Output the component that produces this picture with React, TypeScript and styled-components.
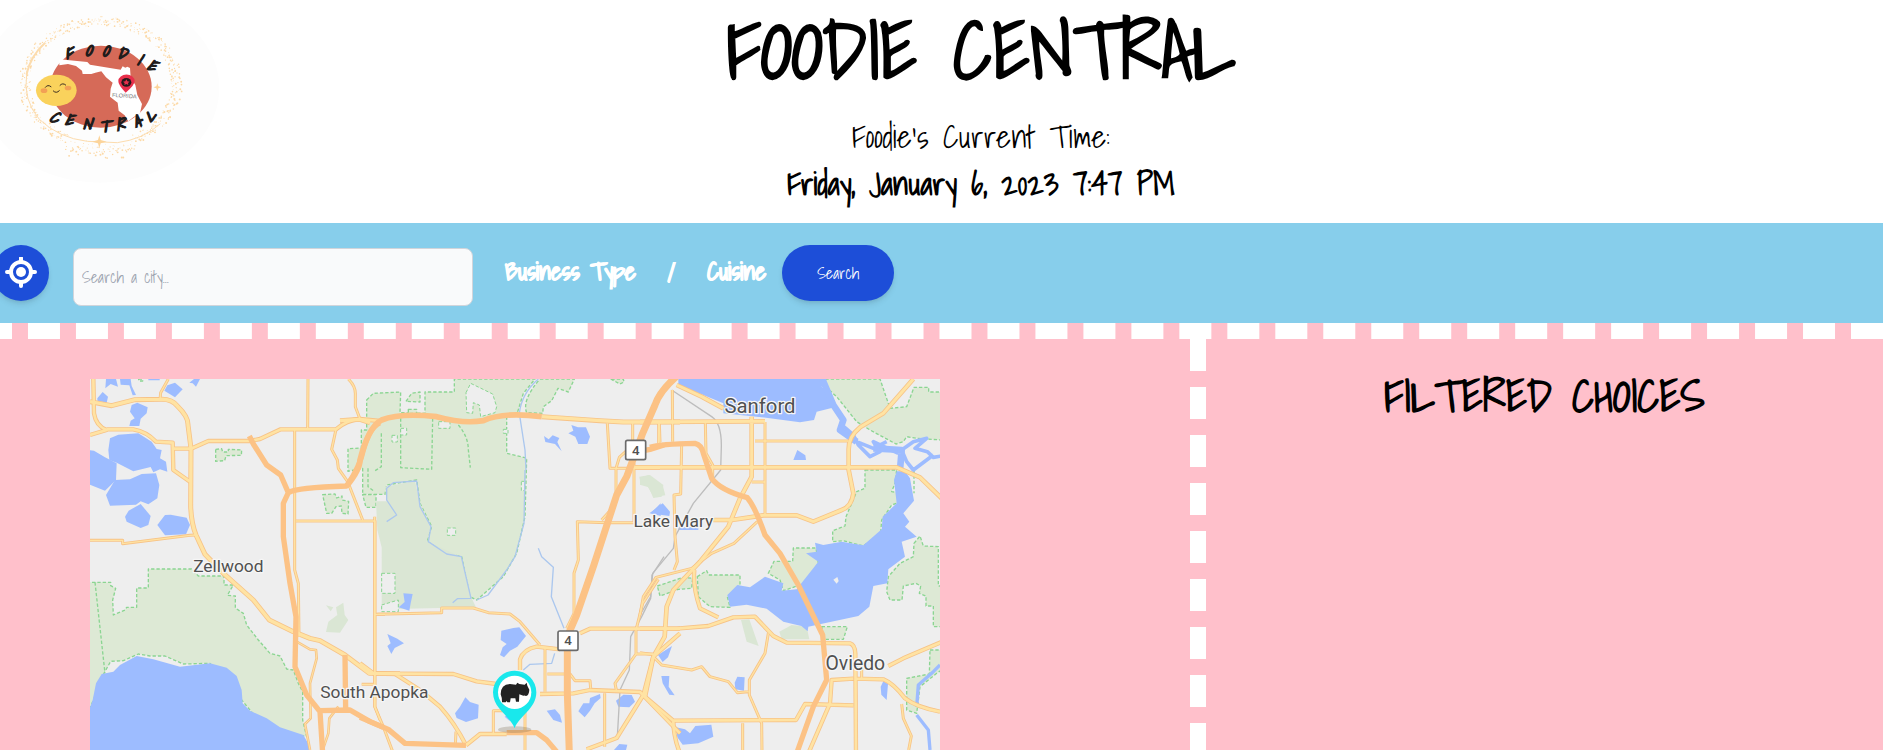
import React from "react";
import styled, { createGlobalStyle } from "styled-components";

const handwriting = `"Shadows Into Light", "Liberation Sans", sans-serif`;

const GlobalStyle = createGlobalStyle`
  *, *::before, *::after { box-sizing: border-box; }
  body { margin: 0; background: #fff; color: #000; font-family: ${handwriting}; }
  h1, h2, p { margin: 0; }
  button, input { font-family: inherit; }
`;

const Page = styled.div`
  height: 100vh;
  overflow: hidden;
  display: flex;
  flex-direction: column;
`;

const Header = styled.header`
  display: grid;
  grid-template-columns: 220px 1fr 141px;
  flex: none;
`;

const LogoArt = styled.svg`
  display: block;
  width: 220px;
  height: 190px;
`;

const Heading = styled.div`
  text-align: center;
  padding-bottom: 16px;
`;

const Title = styled.h1`
  font-size: 80px;
  line-height: 100px;
  font-weight: 700;
`;

const TimeLabel = styled.p`
  margin-top: 12px;
  font-size: 32px;
  line-height: 48px;
`;

const TimeValue = styled.p`
  font-size: 32px;
  line-height: 47px;
  font-weight: 700;
`;

const Toolbar = styled.form`
  flex: none;
  display: flex;
  align-items: center;
  height: 100px;
  margin-left: -7px;
  background: #87ceeb;
`;

const PillButton = styled.button<{ $round?: boolean }>`
  display: flex;
  align-items: center;
  justify-content: center;
  width: ${(p) => (p.$round ? 56 : 112)}px;
  height: 56px;
  padding: 0;
  border: 0;
  border-radius: 28px;
  background: #1d4ed8;
  color: #fff;
  font-size: 16px;
  box-shadow: 0 4px 6px -1px rgba(0, 0, 0, 0.1), 0 2px 4px -2px rgba(0, 0, 0, 0.1);
  cursor: pointer;
`;

const CityInput = styled.input`
  width: 400px;
  height: 58px;
  margin: 8px 32px 0 24px;
  padding: 0 8px;
  border: 1px solid #d1d5db;
  border-radius: 8px;
  background: #f9fafb;
  font-size: 16px;
  &::placeholder { color: #9ca3af; opacity: 1; }
`;

const Filters = styled.div`
  display: flex;
  align-items: center;
  gap: 32px;
  margin-right: 16px;
  padding-bottom: 4px;
  color: #fff;
  font-size: 24px;
  font-weight: 700;
  -webkit-text-stroke: 1px #fff;
`;

const FilterButton = styled.button`
  padding: 0;
  border: 0;
  background: none;
  color: inherit;
  font-size: inherit;
  font-weight: inherit;
  cursor: pointer;
`;

const Board = styled.main`
  flex: 1 0 auto;
  display: grid;
  grid-template-columns: 1210fr 693fr;
  margin-left: -20px;
  border-top: 16px dashed #fff;
  background: pink;
`;

const MapPanel = styled.section`
  padding: 40px 250px 0 110px;
`;

const MapArt = styled.svg`
  display: block;
  width: 100%;
  height: auto;
  background: #eee;
`;

const Choices = styled.section`
  padding: 28px 0 0 16px;
  text-align: center;
  background: repeating-linear-gradient(#fff 0 32px, transparent 32px 48px) 0 0 / 16px 100% no-repeat;
`;

const ChoicesTitle = styled.h2`
  font-size: 45px;
  line-height: 56px;
  font-weight: 700;
`;

/* ---------- logo ---------- */

const rim = Array.from({ length: 520 }, (_, i) => {
  const a = i * 2.399963;
  const n = Math.abs(Math.sin(i * 12.9898) * 43758.5453) % 1;
  const m = Math.abs(Math.sin(i * 78.233) * 12543.123) % 1;
  const spread = 0.94 + n * 0.15;
  return {
    x: 302 + Math.cos(a) * 225 * spread,
    y: 250 + Math.sin(a) * 184 * spread + (Math.sin(a) > 0.9 ? m * 34 : 0),
    r: 1 + m * 2,
  };
});

const topLetters: [string, number, number, number][] = [
  ["F", 209, 176, -8], ["O", 266, 168, 0], ["O", 317, 169, 2],
  ["D", 363, 177, 10], ["I", 412, 195, 20], ["E", 448, 212, 28],
];
const bottomLetters: [string, number, number, number][] = [
  ["C", 158, 367, 24], ["E", 204, 376, 14], ["N", 260, 388, 8], ["T", 311, 395, 0],
  ["R", 364, 391, -8], ["A", 416, 380, -18], ["L", 461, 361, -32],
];

const Logo = () => (
  <LogoArt viewBox="0 0 660 570" role="img" aria-label="Foodie Central logo">
    <ellipse cx="300" cy="264" rx="358" ry="284" fill="#fdfdfd" />
    <g fill="#fcd9a6">
      {rim.map((d, i) => <circle key={i} cx={d.x} cy={d.y} r={d.r} />)}
    </g>
    <g fill="none" stroke="#fcdcae" strokeLinecap="round">
      <path d="M134 130Q92 168 80 222" strokeWidth="6" />
      <path d="M80 222Q68 300 118 358Q176 414 262 424L352 428Q430 418 480 372" strokeWidth="3" />
    </g>
    <path d="M298 406l4 14 18 5-18 5-4 14-4-14-18-5 18-5zM472 250l3 9 9 3-9 3-3 9-3-9-9-3 9-3z" fill="#fcd49a" />
    <ellipse cx="303" cy="260" rx="152" ry="123" fill="#d66a58" />
    <path d="M178 178L262 186L270 194L362 209L368 199L376 203L382 200L390 204L392 232L406 255L412 285L426 312L420 340L400 352L385 364L374 346L356 332L353 308L330 290L332 266L338 248L318 232L304 214L286 218L274 222L248 222L246 212L228 198L204 192L178 196Z" fill="#fff" />
    <path d="M377 278Q354 254 355 243A23 18 0 0 1 404 243Q404 256 377 278Z" fill="#e8304c" />
    <ellipse cx="379" cy="247" rx="15" ry="13" fill="#241a1c" />
    <path d="M379 238l3 6 7 1-5 4 1 6-6-3-6 3 1-6-5-4 7-1z" fill="#e8304c" />
    <text x="373" y="293" fontSize="17" textAnchor="middle" fontFamily="Liberation Sans, sans-serif" fill="#777" transform="rotate(4 373 290)">FLORIDA</text>
    <ellipse cx="169" cy="271" rx="61" ry="47" fill="#fad25c" />
    <ellipse cx="132" cy="272" rx="10" ry="7" fill="#f2a055" />
    <ellipse cx="204" cy="264" rx="10" ry="7" fill="#f2a055" />
    <path d="M136 262Q143 252 153 260M180 256Q188 247 197 255M160 273Q169 282 178 272" fill="none" stroke="#3a2b20" strokeWidth="3" strokeLinecap="round" />
    <g fontSize="48" fontWeight="700" fontStyle="italic" textAnchor="middle" fill="#1f1c1c" stroke="#1f1c1c" strokeWidth="3" fontFamily="Shadows Into Light, Liberation Sans, sans-serif">
      {[...topLetters, ...bottomLetters].map(([c, x, y, r], i) => (
        <text key={i} x={x} y={y} transform={`rotate(${r} ${x} ${y})`}>{c}</text>
      ))}
    </g>
  </LogoArt>
);

const LocateIcon = () => (
  <svg width="32" height="32" viewBox="0 0 32 32" aria-hidden="true">
    <g fill="none" stroke="#fff">
      <circle cx="16" cy="15" r="10" strokeWidth="4" />
      <path d="M16 1v4M16 25v4M2 15h4M26 15h4" strokeWidth="4" strokeLinecap="round" />
    </g>
    <circle cx="16" cy="15" r="5" fill="#fff" />
  </svg>
);

/* ---------- map: three sectors, each with its own origin ---------- */

type Sector = {
  dx: number;
  parks: string[];
  woods: string[];
  clear: string[];
  water: string[];
  streams: [string, number][];
  rail: string[];
  roads: [string, number][];
  highways: [string, number][];
};

const sectors: Sector[] = [
  {
    dx: -30,
    parks: [
      "M20 637L92 637L92 647L107 655L98 690L100 735L135 720L140 712L170 712L170 654L205 654L205 597L335 597L355 618L432 618L432 645L460 645L442 676L466 678L466 714L490 730L500 765L535 810L570 850L600 858L620 897L640 900L655 940L668 965L668 1050L680 1100L560 1080L460 960L390 880L310 882L255 858L210 858L175 852L130 872L92 874L72 910L20 1040Z",
      "M45 637L75 910",
      "M407 238L425 236L428 246L445 246L445 238L485 240L484 256L438 257L434 272L407 274Z",
      "M728 374L765 372L770 384L786 378L786 390L806 394L804 432L786 430L784 408L768 410L755 430L740 430Z",
      "M176 27h12v6h-12z",
    ],
    woods: ["M738 786L745 755L772 735L768 712L790 698L794 735L805 750L780 788Z M738 706L752 724L760 712Z"],
    clear: [],
    water: [
      "M20 1040L38 990L48 940L65 912L100 905L120 885L170 858L220 868L300 890L390 880L440 893L470 918L485 960L488 1000L510 1022L560 1045L600 1072L670 1095L690 1130L690 1150L20 1150Z",
      "M85 240L90 205L115 194L175 190L215 215L230 237L245 240L240 265L258 275L262 305L240 298L220 307L212 291L160 304L110 278L88 270Z",
      "M20 240L42 242L75 262L110 280L108 330L75 362L20 340Z",
      "M78 375L105 330L150 328L185 312L228 310L238 345L232 385L205 403L182 394L168 404L90 407Z",
      "M135 440L146 422L182 402L212 438L205 465L182 474L140 455Z",
      "M232 465L255 435L272 434L320 443L330 465L318 493L255 496Z",
      "M150 125L155 105L172 98L203 112L200 130L182 146L178 168L148 168L152 152L164 145Z",
      "M253 62L262 46L285 38L308 58L285 82Z",
      "M78 27L108 27L114 50L92 42L76 55Z M120 27L152 27L155 48L168 75L158 76L148 46L122 44Z M52 85L68 66L84 80L80 98L52 92Z M328 38L342 27L360 27L348 50L338 40Z M205 27h34v4h-34z",
    ],
    streams: [],
    rail: [],
    roads: [
      ["M30 95L95 107L165 89L240 88Q275 86 292 108Q325 140 324 165L333 236L332 410Q334 460 348 495L375 553L430 610L520 690L568 750L640 785L690 805L720 812L795 855L868 910L960 911", 15],
      ["M40 27L42 130Q48 168 80 180L30 195M80 178L160 178Q200 185 228 215L278 218L280 300L330 335M278 236L333 236L385 213L508 213L540 207L602 178L768 178Q800 150 840 147L900 153", 13],
      ["M240 88L242 68L265 27M684 27L683 175M805 27Q828 50 826 75L826 110L840 147M768 178L755 238L772 270L775 295L803 335L848 450", 9],
      ["M30 511L128 511L128 521L330 496L348 495M644 178L644 600L655 640L657 800M648 453L885 453L885 1010L900 1050M885 733h30M845 943h40", 9],
      ["M650 815L690 838L708 840L710 865L690 940L692 1045L675 1062L690 1140M775 1010L748 1045L745 1090L728 1140", 8],
    ],
    highways: [
      ["M508 198L520 222L560 285L602 315L625 368L610 400L610 500L630 640L648 740L645 890L680 975L720 1025L728 1150M625 368Q650 352 800 348Q840 290 850 240Q870 170 900 158M795 855L797 1020M720 1022L810 1020L870 1055L910 1072", 16],
    ],
  },
  {
    dx: 810,
    parks: [
      "M20 90L40 70L122 66L120 128L195 130L195 66L283 66L283 27L525 27L490 70L470 135L440 142L440 250L500 264L495 440L470 550L430 620L350 690L330 680L305 560L260 550L200 514L215 470L180 400L170 330L80 345L75 373L8 373L8 295L-36 304L-36 236L4 234L4 180L20 180Z",
      "M138 94L155 70L180 66L180 96Z M145 118h25v12h-25z",
      "M122 145L122 293L215 298L218 145M295 165Q325 200 325 240L331 293M24 295L24 350L40 362M64 190L64 290L42 304",
      "M8 374L48 374L48 412L18 412Z",
      "M540 27L643 27L625 66L594 55L575 92L550 110L548 130L500 128Q485 90 540 27Z",
      "M752 27L780 42L792 36L790 27Z",
    ],
    woods: [
      "M48 394L80 394L75 350L165 332L180 400L213 470L200 514L305 562L333 680L348 712L65 718L65 532L52 480Z",
      "M838 320L870 315L910 345L905 380L880 384L866 352L842 345Z",
    ],
    clear: [
      "M318 68L332 40L398 72L410 110L405 128L362 140L358 105L340 98L338 130L320 128Z",
      "M236 155h34v20h-34z M262 474h25v22h-25z M122 175h18v20h-18z M96 196h16v20h-16z M430 178h14v12h-14z M484 334h10v28h-10z",
      "M65 610h40v60h-40z M65 705L115 690L115 725L65 725Z",
    ],
    water: [
      "M130 670L158 672L152 700L148 722L116 712L134 696Z",
      "M82 792L112 806L132 820L104 834L94 852L82 828L92 820Z",
      "M424 782L460 774L478 772L498 798L472 830L450 842L432 862L420 855L428 832L440 822L422 810Z",
      "M552 198L566 208L578 196L598 204L592 216L605 244L585 222L556 216Z",
      "M625 190L640 182L634 165L654 172L678 172L690 200L682 222L655 222L646 200Z",
      "M285 1030L300 1010L316 982L330 996L356 1004L354 1045L318 1056L290 1044Z",
      "M560 1022L585 1018L600 1035L606 1058L580 1050Z",
      "M655 1024L670 1000L688 1000L690 984L720 972L722 984L704 1000L690 1022L674 1042Z",
      "M768 992L790 974L815 975L825 995L808 1012L775 1010Z M762 1140L778 1122L802 1124L798 1140Z",
      "M872 430L902 400L902 438Z M434 1040l10 -6 6 20z",
    ],
    streams: [
      ["M535 27Q485 70 478 130L495 240L498 300M80 455L110 435L80 390L80 355L100 338L170 333L180 410L213 470L205 515L260 552L304 560L333 685L292 686L278 698M350 690L384 675L440 600L465 560L492 460L495 300M535 535L545 560L580 592L574 680L612 775M490 900L510 883L575 880L584 850", 4],
    ],
    rail: ["M912 560L876 615L872 685L845 740L812 800L808 900L780 960L772 1100"],
    roads: [
      ["M-60 152L0 148L30 158M545 140L720 152L790 156L960 156", 15],
      ["M0 880L42 911L82 911L280 912L350 934L410 942M105 912L180 960L240 1010Q285 1060 318 1126M318 1126L360 1092L440 1092M540 972L640 970L690 960L840 966L960 1090M660 790L690 776L960 776M480 900L480 868Q490 838 530 830L600 838M680 1138L770 1104L850 975L880 860L960 790", 13],
      ["M44 440L44 1010L70 1070L100 1150M52 733L245 728L245 714L340 714L385 728L450 732L480 755L540 825M555 830L555 965M400 1090L400 1022L440 1022M495 1010L495 1150M562 912L630 912L645 932L690 932L692 955M286 1126L288 1085M734 970L734 1130", 9],
      ["M742 160L750 295L900 295M818 160L818 210M822 280L822 458L740 458L652 455L655 570L642 610L642 730L620 775M768 295L768 370L752 420L725 450M768 295L778 262L800 242M828 780L828 852L765 940L770 965M828 852L880 852M828 780L848 700L895 628M896 160L896 220", 9],
    ],
    highways: [
      ["M-40 348Q0 300 0 270Q25 170 65 150Q120 128 230 140Q310 162 370 152Q430 125 545 140", 17],
      ["M960 10Q900 60 885 105L848 190L800 320L770 375L700 590L650 735L622 800L622 970L628 1150", 21],
      ["M835 245L870 238L912 225M0 1042L85 1078L135 1120L318 1126M440 1088L530 1088L560 1110L590 1145", 16],
    ],
  },
  {
    dx: 1650,
    parks: [
      "M545 40L560 27L720 27L750 115L800 110L822 52L866 52L866 66L905 66L905 210L830 205L800 200L790 215L768 222L690 180L650 155L590 80Z",
      "M675 300L770 300L765 340L755 365L790 370L785 395L755 405L725 450L722 490L670 528L610 512L578 515L578 482L615 468L618 440L650 365L675 355Z",
      "M385 610L402 574L458 574L460 534L528 534L535 580L495 640L430 662L420 630Z",
      "M172 620L200 602L206 615L300 615L300 645L262 680L270 712L210 710L175 680Z M52 648L130 622L158 625L155 655L115 658L60 678Z",
      "M545 770L622 770L610 808L550 808Z",
      "M822 520L840 498L850 528L895 530L895 648L905 648L905 770L880 770L880 708L858 708L858 678L838 670L842 648L828 640L790 648L786 690L750 690L740 665L745 620L780 580L820 560Z",
      "M870 840L905 840L905 900L890 910L840 950L830 1030L800 1020L800 925L868 912Z",
      "M822 300L822 370",
    ],
    woods: [
      "M0 325L25 315L68 345L76 376L42 382L20 345L0 345Z",
      "M303 750L328 748L356 828L320 815Z M418 785L455 765L500 770L508 808L425 808Z",
    ],
    clear: [],
    water: [
      "M115 20L565 20L545 50L575 80L590 110L530 125L522 150L480 157L378 143L250 130L250 100L190 75L115 45Z",
      "M262 675L292 645L330 652L375 620L430 640L425 662L470 658L535 575L498 550L530 545L525 518L550 525L605 515L670 526L725 478L728 440L770 400L762 330L770 304L795 304L810 325L822 392L790 430L808 455L795 470L830 500L785 515L795 560L745 598L742 640L700 648L688 710L655 738L560 758L505 770L503 784L484 768L430 755L380 716L320 704L270 710Z",
      "M460 270L472 240L496 256L498 270Z M28 430L68 400L90 425L88 438Z M54 855L96 828L84 862L68 876Z M64 918L88 918L86 950L104 976L88 974L68 940Z M284 938L292 920L314 922L312 962L286 958Z M722 950L730 934L744 942L740 990L724 974Z",
      "M108 1072L135 1078L150 1090L166 1068L214 1064L220 1100L175 1120L128 1124L112 1102Z",
      "M115 472h60v8h-60z",
    ],
    streams: [
      ["M548 30L580 105L610 150L600 180L650 215M700 235L785 240L780 300", 20],
      ["M600 160L640 195L655 225L690 260L720 245L700 215L775 250M650 215L700 235L740 215M785 240L820 215L860 205L825 235L862 245L880 262L905 258M785 240L800 275L820 300L880 255", 11],
      ["M900 885L880 905L835 945L830 1010M830 1035L865 1080L870 1140", 10],
    ],
    rail: ["M95 60L215 140Q245 160 244 230L242 300L160 400L105 500L100 535L38 610L32 680L0 735"],
    roads: [
      ["M110 45L185 80L250 115M0 156L375 154M335 140L335 320L300 385L265 470L180 575L100 660L80 710L74 800L40 860L15 980M-20 292L770 292L840 322L905 385M820 27L730 130L660 172Q625 200 626 240L626 300L640 370Q635 410 605 420L520 455L470 436L370 436L275 450L220 450", 14],
      ["M0 776L110 776L205 768L280 742L345 740L400 798L440 818L630 820Q645 825 646 850L648 1150M163 600Q158 650 180 715L235 742M648 926L730 928Q760 940 795 985Q830 1012 900 1025M15 980L100 1052L468 1050L495 1002L640 1006M100 1052Q100 1100 120 1150M640 926L575 930L570 1000L505 1150M905 816L790 865L745 888", 13],
      ["M97 60L98 215M375 156L375 436M345 213L626 213M58 160L60 218M196 160L198 250L218 285L218 325M125 220L122 372L102 375L105 500L112 575L102 600M335 336L375 336", 9],
      ["M352 455L282 520L215 550L155 595L48 622L10 680L0 735M40 860L65 885L155 900L185 890L210 920L265 935L292 968L325 965M385 790L375 850L328 930L328 975L365 1060L366 1150M308 1060L308 1150M0 848L42 854M785 1002L790 1045L814 1098L806 1140M665 880L665 926", 9],
    ],
    highways: [
      ["M30 232Q60 222 165 220Q185 225 190 250L215 325Q240 360 322 383Q345 410 375 495L420 550L475 645L548 795L560 930L520 1010L470 1150", 16],
    ],
  },
];

const Layer = ({ s, children }: { s: Sector; children: React.ReactNode }) => (
  <g transform={`translate(${s.dx} -27)`}>{children}</g>
);

const places = [
  { name: "Sanford", x: 2010, y: 101, size: 61 },
  { name: "Lake Mary", x: 1750, y: 443, size: 52 },
  { name: "Zellwood", x: 415, y: 579, size: 52 },
  { name: "Oviedo", x: 2296, y: 874, size: 58 },
  { name: "South Apopka", x: 853, y: 957, size: 52 },
];

const routeSigns = [{ x: 1637, y: 213 }, { x: 1434, y: 785 }];

const RegionMap = () => (
  <MapArt viewBox="0 0 2550 1116" role="img" aria-label="Map of the Orlando area">
    <g strokeLinejoin="round">
      {sectors.map((s) => (
        <Layer key={s.dx} s={s}>
          {s.parks.map((d) => <path key={d} d={d} fill={d.includes("Z") ? "#dde9d5" : "none"} stroke="#8bd592" strokeWidth="4" strokeDasharray="10 6" />)}
          {s.woods.map((d) => <path key={d} d={d} fill="#dae6d4" />)}
          {s.clear.map((d) => <path key={d} d={d} fill="#eee" stroke="#8bd592" strokeWidth="3" strokeDasharray="10 6" />)}
          {s.water.map((d) => <path key={d} d={d} fill="#9dbcff" />)}
          {s.streams.map(([d, w]) => <path key={d} d={d} fill="none" stroke={w > 5 ? "#9dbcff" : "#abc7ee"} strokeWidth={w} />)}
          {s.rail.map((d) => <path key={d} d={d} fill="none" stroke="#bdbdbd" strokeWidth="4" />)}
        </Layer>
      ))}
      {sectors.map((s) => (
        <Layer key={s.dx} s={s}>
          {s.roads.map(([d, w]) => <path key={d} d={d} fill="none" stroke="#f7c387" strokeWidth={w} />)}
        </Layer>
      ))}
      {sectors.map((s) => (
        <Layer key={s.dx} s={s}>
          {s.roads.map(([d, w]) => <path key={d} d={d} fill="none" stroke="#ffe3a3" strokeWidth={w - 5} />)}
        </Layer>
      ))}
      {sectors.map((s) => (
        <Layer key={s.dx} s={s}>
          {s.highways.map(([d, w]) => <path key={d} d={d} fill="none" stroke="#fcc285" strokeWidth={w} />)}
        </Layer>
      ))}
    </g>
    <path d="M2230 602l12 -8 4 12 -6 8z" fill="#eee" />
    <g fontFamily="Roboto, sans-serif" textAnchor="middle" fill="#505050" stroke="#f6f6f6" strokeWidth="8" strokeLinejoin="round" paintOrder="stroke">
      {places.map((p) => <text key={p.name} x={p.x} y={p.y} fontSize={p.size}>{p.name}</text>)}
    </g>
    {routeSigns.map((r) => (
      <g key={r.x} transform={`translate(${r.x} ${r.y})`}>
        <rect x="-30" y="-29" width="60" height="58" rx="5" fill="#fff" stroke="#6b6b6b" strokeWidth="5" />
        <text y="14" fontFamily="Roboto, sans-serif" fontSize="40" fontWeight="500" textAnchor="middle" fill="#505050">4</text>
      </g>
    ))}
    <g transform="translate(1274 940)">
      <ellipse cx="0" cy="112" rx="50" ry="10" fill="#6b5a40" opacity="0.25" />
      <path d="M0 108C-12 72 -65 50 -65 0A65 65 0 0 1 65 0C65 50 12 72 0 108Z" fill="#19e8ec" />
      <circle r="50" fill="#fff" />
      <path d="M-42 6Q-42 -24 -14 -25L4 -23L8 -29L14 -25L30 -23L36 -29L38 -20L44 -8Q43 10 34 11Q30 8 26 10L14 6L13 28H4L2 18H-12L-14 30H-22L-24 26L-27 30H-38Q-38 14 -42 6Z" fill="#222" />
    </g>
  </MapArt>
);

export default function App() {
  return (
    <Page>
      <GlobalStyle />
      <Header>
        <Logo />
        <Heading>
          <Title>FOODIE CENTRAL</Title>
          <TimeLabel>Foodie's Current Time:</TimeLabel>
          <TimeValue>Friday, January 6, 2023 7:47 PM</TimeValue>
        </Heading>
      </Header>
      <Toolbar onSubmit={(e) => e.preventDefault()}>
        <PillButton $round type="button" aria-label="Use my location"><LocateIcon /></PillButton>
        <CityInput type="text" aria-label="City" placeholder="Search a city..." />
        <Filters>
          <FilterButton type="button">Business Type</FilterButton>
          <span>/</span>
          <FilterButton type="button">Cuisine</FilterButton>
        </Filters>
        <PillButton type="submit">Search</PillButton>
      </Toolbar>
      <Board>
        <MapPanel><RegionMap /></MapPanel>
        <Choices><ChoicesTitle>FILTERED CHOICES</ChoicesTitle></Choices>
      </Board>
    </Page>
  );
}
